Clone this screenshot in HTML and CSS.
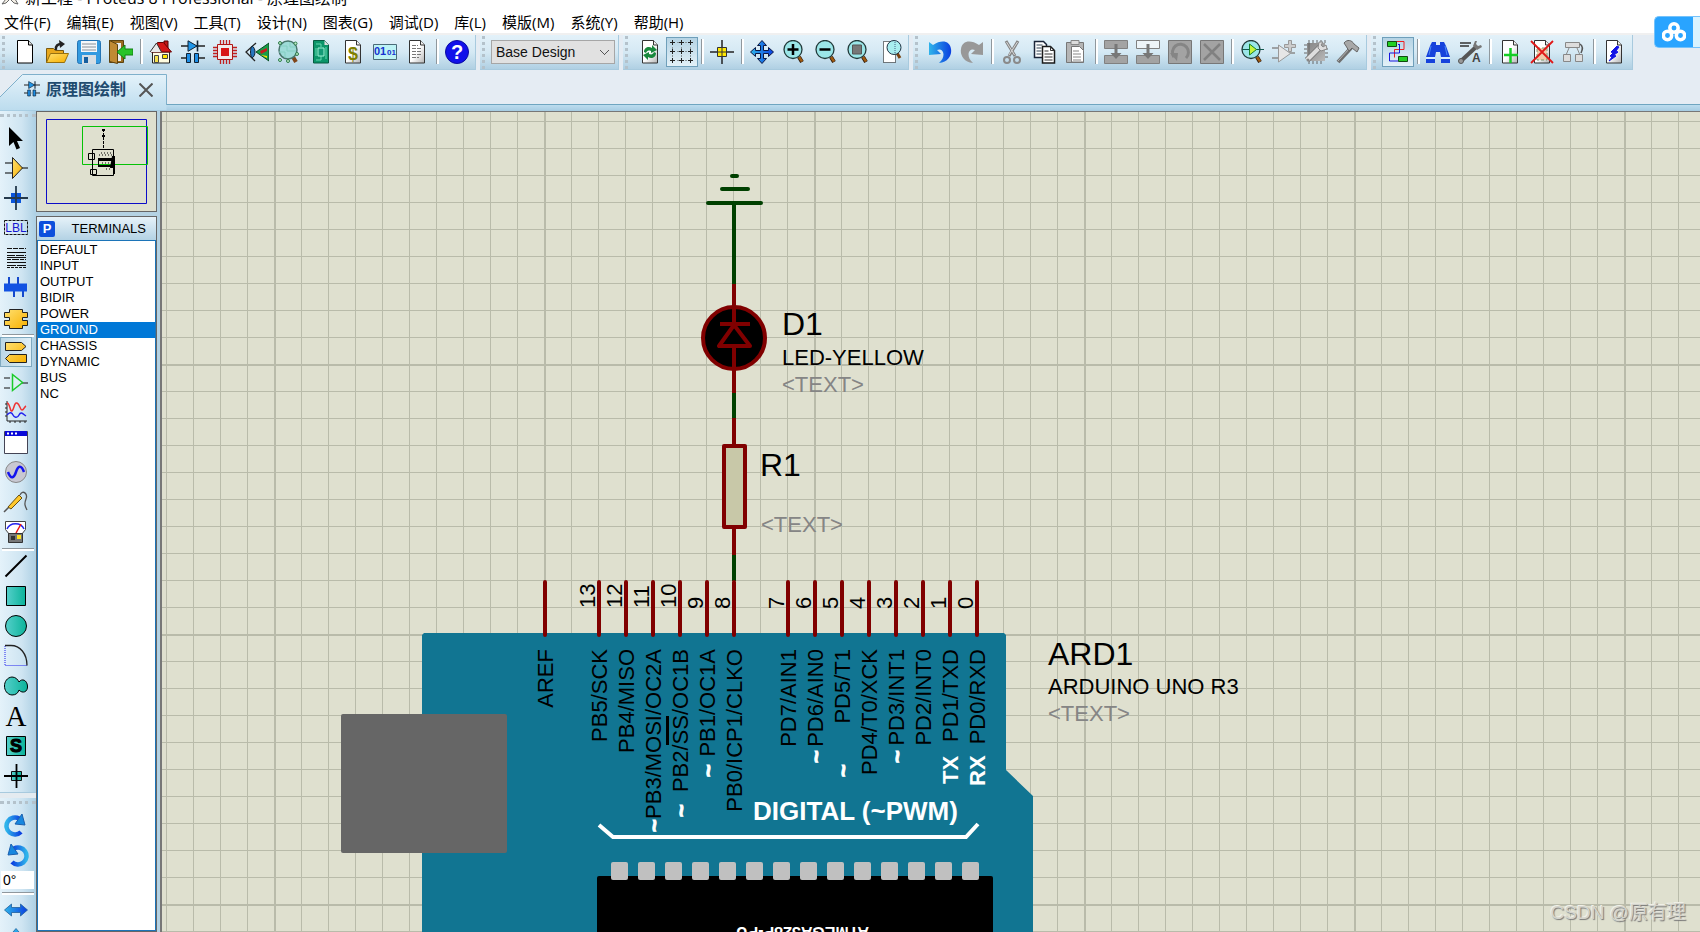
FILE: index.html
```html
<!DOCTYPE html>
<html lang="zh-CN">
<head>
<meta charset="utf-8">
<title>新工程 - Proteus 8 Professional - 原理图绘制</title>
<link rel="stylesheet" href="styles.css">
</head>
<body>
<svg class="defs" width="0" height="0" aria-hidden="true">
  <defs>
    <linearGradient id="gBlue" x1="0" y1="0" x2="1" y2="0"><stop offset="0" stop-color="#2fb4ea"/><stop offset="1" stop-color="#0a3fe0"/></linearGradient>
    <linearGradient id="gGold" x1="0" y1="0" x2="1" y2="1"><stop offset="0" stop-color="#ffe070"/><stop offset="1" stop-color="#f8b000"/></linearGradient>
    <linearGradient id="gTeal" x1="0" y1="0" x2="1" y2="0"><stop offset="0" stop-color="#55cfca"/><stop offset="1" stop-color="#0bb39a"/></linearGradient>
    <linearGradient id="gGrey" x1="0" y1="0" x2="1" y2="1"><stop offset="0" stop-color="#858585"/><stop offset="1" stop-color="#b8b8b8"/></linearGradient>
    <linearGradient id="gPage" x1="0" y1="0" x2="1" y2="1"><stop offset="0.5" stop-color="#ffffff"/><stop offset="1" stop-color="#b4b4b4"/></linearGradient>
    <linearGradient id="gTab" x1="0" y1="0" x2="0" y2="1"><stop offset="0" stop-color="#e4f2fa"/><stop offset="1" stop-color="#bcdcee"/></linearGradient>
    <symbol id="page" viewBox="0 0 24 24"><path d="M4.500.5h11l4 4.500v18h-15z" fill="url(#gPage)" stroke="#333"/><path d="M15.500.5v4.500h4" fill="#eee" stroke="#333"/></symbol>
    <symbol id="lens" viewBox="0 0 24 24"><path d="M17 17l3 5" stroke="#2a1608" stroke-width="4"/><path d="M17 17l3 4.500" stroke="#a05a10" stroke-width="2.500"/><circle cx="11" cy="9.500" r="9" fill="#9be6e8" stroke="#223a3a" stroke-width="1.300"/></symbol>
    <symbol id="parts" viewBox="0 0 24 24"><path d="M0 6h24M0 18h24" stroke="#222" stroke-width="1.500"/><path d="M7 .8v10.500L16 6z" fill="#2196e8" stroke="#123" /><path d="M16.500.5v11" stroke="#123" stroke-width="1.600"/><path d="M5.500 13.500h4v9h-4zM13.500 13.500h4v9h-4z" fill="#1f8fe6" stroke="#123"/><path d="M10 17h3v2h-3z" fill="#d0e6f2"/></symbol>
    <symbol id="undo" viewBox="0 0 24 24"><path d="M1 2v13l12-1-4-4c6-3 10 6 2 13 10-1 13-9 12-14C22 1 14-1 5 5z"/></symbol>
    <symbol id="turn" viewBox="0 0 24 24"><path d="M17 19A8.500 8.500 0 1 1 15 5.500" fill="none" stroke="url(#gBlue)" stroke-width="4.500"/><path d="M18 1l3 11-10-1z" fill="#1787df" stroke="#1b5fae"/></symbol>
    <symbol id="harrow" viewBox="0 0 24 24"><path d="M.5 12l7-6v3.500h9V6l7 6-7 6v-3.500h-9V18z" fill="url(#gBlue)" stroke="#1f5f9c" stroke-width=".8"/></symbol>
  </defs>
</svg>

<header class="titlebar">
  <svg class="title-icon" viewBox="0 0 18 18" aria-hidden="true"><path d="M1 17l4-5 3-2h3l3 2 3 5-4-1-4-4-4 4z" fill="#f4efe6" stroke="#666"/></svg>
  <span class="title-text">新工程 - Proteus 8 Professional - 原理图绘制</span>
</header>

<nav class="menubar" aria-label="主菜单">
  <button>文件(F)</button><button>编辑(E)</button><button>视图(V)</button><button>工具(T)</button><button>设计(N)</button><button>图表(G)</button><button>调试(D)</button><button>库(L)</button><button>模版(M)</button><button>系统(Y)</button><button>帮助(H)</button>
</nav>

<div class="toolbars">
  <div class="group first">
    <button class="tool" aria-label="新建"><svg viewBox="0 0 24 24"><path d="M4.500.5h11l4 4.500v18h-15z" fill="#fff" stroke="#000"/><path d="M15.500.5v4.500h4" fill="#ddd" stroke="#000"/></svg></button>
    <button class="tool" aria-label="打开"><svg viewBox="0 0 24 24"><path d="M1.500 22.500V8.500h7l2 2h8v12z" fill="#e9a81c" stroke="#7a5a10"/><path d="M1.500 22.500l4-9h18l-4 9z" fill="url(#gGold)" stroke="#96700f"/><path d="M11 10c-1-4 2-6 5-6" fill="none" stroke="#222" stroke-width="2.500"/><path d="M14 0l6 4-5 4z" fill="#222"/></svg></button>
    <button class="tool" aria-label="保存"><svg viewBox="0 0 24 24"><rect x=".5" y=".5" width="23" height="23" rx="2" fill="#329ae0" stroke="#2474b4"/><path d="M4 1h16v11H4z" fill="#f4f8fb"/><path d="M5 4h14M5 7h14M5 10h14" stroke="#879099"/><path d="M5 15h14v9H5z" fill="#d6dee4"/><path d="M7 17h4v6H7z" fill="#165f9f"/></svg></button>
    <button class="tool" aria-label="关闭"><svg viewBox="0 0 24 24"><path d="M.5.500h14v22H.5z" fill="#9b6c20" stroke="#5c4210"/><path d="M4 3h8v18H4z" fill="#e8edf0"/><path d="M.5.500l8 4v19l-8-2z" fill="#c08a33" stroke="#5c4210"/><path d="M8 12l8-7v4h8v6h-8v4z" fill="#28c428" stroke="#138013"/></svg></button>
    <span class="sep"></span>
    <button class="tool" aria-label="主页"><svg viewBox="0 0 24 24"><path d="M15 1h4v8h-4z" fill="#c01818" stroke="#500"/><path d="M3.500 12h17v11h-17z" fill="#fffce0" stroke="#222"/><path d="M8.500 2.500l6 0 8 9.500H2z" fill="#d31717" stroke="#600"/><path d="M1 12l6.500-9 5 9" fill="#e8e8e8" stroke="#333"/><path d="M5.500 15.500h4v7h-4z" fill="#f5e04d" stroke="#444"/><path d="M13.500 14.500h5v4h-5z" fill="#ffe600" stroke="#444"/></svg></button>
    <button class="tool" aria-label="原理图"><svg><use href="#parts"/></svg></button>
    <button class="tool" aria-label="PCB"><svg viewBox="0 0 24 24"><path d="M7.500 0v24M10.500 0v24M13.500 0v24M16.500 0v24M0 7.500h24M0 10.500h24M0 13.500h24M0 16.500h24" stroke="#c02020" stroke-width="1.300"/><path d="M4.500 4.500h15v15h-15z" fill="#f0eaea" stroke="#b01515"/><path d="M8 8h8v8H8z" fill="#d81515"/></svg></button>
    <button class="tool" aria-label="3D"><svg viewBox="0 0 24 24"><path d="M11 3L1 12l9 9" fill="none" stroke="#222" stroke-width="1.300"/><path d="M7 6c4 2 4 10 0 12-2-3-2-9 0-12" fill="#2677c0" stroke="#123"/><path d="M11 12L24 3v18z" fill="#189c48" stroke="#064a20"/><path d="M15 11l7-3v3l-6 3z" fill="#c41e1e"/><path d="M16 15l6 1v2z" fill="#ffe100"/></svg></button>
    <button class="tool" aria-label="查看器"><svg viewBox="0 0 24 24"><path d="M16 17l3 5" stroke="#80451a" stroke-width="4"/><circle cx="11" cy="10" r="9" fill="#9edbd8" stroke="#49756c" stroke-width="1.500"/><path d="M3 6h7v5h9M8 18v-6H2M13 2v5h6" fill="none" stroke="#84cfc2"/><g fill="#c3ecc8" stroke="#2b7c4b"><circle cx="3" cy="3" r="1.500"/><circle cx="18.500" cy="3.500" r="1.500"/><circle cx="3" cy="20" r="1.500"/><circle cx="11" cy="21" r="1.500"/><circle cx="20" cy="14" r="1.500"/></g></svg></button>
    <button class="tool" aria-label="Gerber"><svg viewBox="0 0 24 24"><path d="M4.500.5h11l4 4.500v18h-15z" fill="#0b9569" stroke="#065a40"/><path d="M15.500.5v4.500h4z" fill="#ddd"/><path d="M7 4h5v3M7 20h5v-4M17 7v12M7 8v8" fill="none" stroke="#64d8b0"/><path d="M9 8h6v8H9z" fill="#139a75" stroke="#9cf2d4"/></svg></button>
    <button class="tool" aria-label="物料清单"><svg viewBox="0 0 24 24"><use href="#page"/><text class="glyph dollar" x="12" y="20" text-anchor="middle">$</text></svg></button>
    <button class="tool" aria-label="源代码"><svg viewBox="0 0 24 24"><path d="M.5 4.500h23v15H.5z" fill="#bdf3f5" stroke="#4a6b78"/><text class="glyph bits" x="1" y="15">01</text><text class="glyph bits-small" x="14" y="15">01</text></svg></button>
    <button class="tool" aria-label="笔记"><svg viewBox="0 0 24 24"><use href="#page"/><path d="M7 5.500h6M7 8.500h10M7 11.500h10M7 14.500h10M7 17.500h7" stroke="#777" stroke-dasharray="4 1"/></svg></button>
    <span class="sep"></span>
    <button class="tool" aria-label="帮助"><svg viewBox="0 0 24 24"><circle cx="12" cy="12" r="11.500" fill="#1111ea" stroke="#0a0aa0"/><text class="glyph help" x="12" y="19" text-anchor="middle">?</text></svg></button>
  </div>

  <div class="group combo">
    <select aria-label="设计变体"><option>Base Design</option></select>
  </div>

  <div class="group">
    <button class="tool" aria-label="刷新"><svg viewBox="0 0 24 24"><use href="#page"/><path d="M6 12c0-5 5-6 8-4V5l5 5-6 3v-2c-3-1-4 0-5 2zM18 13c0 5-5 6-8 4v3l-5-5 6-3v2c3 1 4 0 5-2z" fill="#18883c"/></svg></button>
    <button class="tool on" aria-label="网格"><svg viewBox="0 0 24 24"><g fill="none" stroke="#89959b" stroke-dasharray="2 2"><path d="M3 2.500h18M3 11.500h18M3 20.500h18M2.500 3v18M11.500 3v18M20.500 3v18"/></g><path d="M0 2.500h5M9 2.500h5M18 2.500h5M0 11.500h5M9 11.500h5M18 11.500h5M0 20.500h5M9 20.500h5M18 20.500h5M2.500 0v5M2.500 9v5M2.500 18v5M11.500 0v5M11.500 9v5M11.500 18v5M20.500 0v5M20.500 9v5M20.500 18v5" stroke="#222"/></svg></button>
    <span class="sep"></span>
    <button class="tool" aria-label="原点"><svg viewBox="0 0 24 24"><path d="M0 12h24M12 0v24" stroke="#222" stroke-width="1.500"/><path d="M7.500 7.500h9v9h-9z" fill="#ffe800" stroke="#333"/><path d="M12 8v8M8 12h8" stroke="#333"/></svg></button>
    <span class="sep"></span>
    <button class="tool" aria-label="平移"><svg viewBox="0 0 24 24"><path d="M12 .5l4.500 5h-3v5h5v-3L23.500 12l-5 4.500v-3h-5v5h3l-4.500 5-4.500-5h3v-5h-5v3L.5 12l5-4.500v3h5v-5h-3z" fill="url(#gBlue)" stroke="#0b1742"/></svg></button>
    <button class="tool" aria-label="放大"><svg viewBox="0 0 24 24"><use href="#lens"/><path d="M11 4v11M5.500 9.500h11" stroke="#000" stroke-width="2.500"/></svg></button>
    <button class="tool" aria-label="缩小"><svg viewBox="0 0 24 24"><use href="#lens"/><path d="M5.500 9.500h11" stroke="#000" stroke-width="2.500"/></svg></button>
    <button class="tool" aria-label="全部显示"><svg viewBox="0 0 24 24"><use href="#lens"/><path d="M6.500 5h9v9h-9z" fill="#777" stroke="#555"/></svg></button>
    <button class="tool" aria-label="区域缩放"><svg viewBox="0 0 24 24"><path d="M5.500 1.500h12v21h-12z" fill="#fff" stroke="#000" stroke-dasharray="1 1"/><path d="M19 13l3 5" stroke="#7a4410" stroke-width="3"/><circle cx="16" cy="7.500" r="7" fill="#a8eef0" stroke="#234"/><path d="M17 2v12" stroke="#468" stroke-dasharray="1 1"/></svg></button>
  </div>

  <div class="group">
    <button class="tool" aria-label="撤销"><svg fill="url(#gBlue)"><use href="#undo"/></svg></button>
    <button class="tool" aria-label="重做"><svg viewBox="0 0 24 24" fill="#989898"><g transform="matrix(-1 0 0 1 24 0)"><path d="M1 2v13l12-1-4-4c6-3 10 6 2 13 10-1 13-9 12-14C22 1 14-1 5 5z"/></g></svg></button>
    <span class="sep"></span>
    <button class="tool" aria-label="剪切"><svg viewBox="0 0 24 24"><path d="M6 1l9 15M18 1L9 16" stroke="#858585" stroke-width="3"/><path d="M6.500 2l8 13M17.500 2L9 15" stroke="#d8d8d8"/><circle cx="7" cy="20" r="3" fill="none" stroke="#8a8a8a" stroke-width="2"/><circle cx="17" cy="20" r="3" fill="none" stroke="#8a8a8a" stroke-width="2"/></svg></button>
    <button class="tool" aria-label="复制"><svg viewBox="0 0 24 24"><path d="M2.500 1.500h9l3 3v13h-12z" fill="#fff" stroke="#1a2438" stroke-width="1.500"/><path d="M4.500 5h6M4.500 8h5M4.500 11h5M4.500 14h5" stroke="#345"/><path d="M10.500 6.500h8l4 4v12.500h-12z" fill="#fff" stroke="#1a1a1a" stroke-width="1.500"/><path d="M18.500 6.500v4h4M12.500 11h4M12.500 14h8M12.500 17h8M12.500 20h8" stroke="#333" fill="none"/></svg></button>
    <button class="tool" aria-label="粘贴"><svg viewBox="0 0 24 24"><path d="M2.500 2.500h17v20h-17z" fill="#b5b5b5" stroke="#777"/><path d="M7 .5h8v4H7z" fill="#ddd" stroke="#888"/><path d="M7.500 6.500h8l4 4v11.500h-12z" fill="#fff" stroke="#777"/><path d="M9 11h6M9 14h8M9 17h8M9 20h8" stroke="#888"/></svg></button>
    <span class="sep"></span>
    <button class="tool" aria-label="块复制"><svg viewBox="0 0 24 24"><path d="M.5.5h23v8H.5zM.5 15.500h23v8H.5z" fill="#a3a3a3" stroke="#808080"/><path d="M10.500 4h3v9h4L12 19l-5.500-6h4z" fill="#777"/></svg></button>
    <button class="tool" aria-label="块移动"><svg viewBox="0 0 24 24"><path d="M.5.5h23v8H.5z" fill="#edf4f8" stroke="#808080"/><path d="M.5 15.500h23v8H.5z" fill="#a3a3a3" stroke="#808080"/><path d="M10.500 4h3v9h4L12 19l-5.500-6h4z" fill="#777"/></svg></button>
    <button class="tool" aria-label="块旋转"><svg viewBox="0 0 24 24"><path d="M.5.5h23v23H.5z" fill="#a3a3a3" stroke="#777"/><path d="M6 17a8 8 0 1 1 12 1" fill="none" stroke="#858585" stroke-width="3"/><path d="M2 13h8l-1 8z" fill="#858585"/></svg></button>
    <button class="tool" aria-label="块删除"><svg viewBox="0 0 24 24"><path d="M.5.5h23v23H.5z" fill="#a3a3a3" stroke="#777"/><path d="M4 4l16 16M20 4L4 20" stroke="#808080" stroke-width="2.500"/></svg></button>
    <span class="sep"></span>
    <button class="tool" aria-label="选取器件"><svg viewBox="0 0 24 24"><use href="#lens"/><path d="M2 9.500h22" stroke="#12594e"/><path d="M9.500 4v11l7-5.500z" fill="#c5f33c" stroke="#128228"/></svg></button>
    <button class="tool" aria-label="制作器件"><svg viewBox="0 0 24 24"><path d="M0 8h6M0 18h6M17 13h6" stroke="#8a8a8a" stroke-width="1.500"/><path d="M6.500 5v17l12-8.500z" fill="#e6e6e6" stroke="#999"/><path d="M16.500.5h3v4h4v3h-4v4h-3v-4h-4v-3h4z" fill="#ccc" stroke="#999"/></svg></button>
    <button class="tool" aria-label="封装工具"><svg viewBox="0 0 24 24"><path d="M3 3h18v18H3z" fill="url(#gGrey)"/><path d="M5 0v24M9 0v3M13 0v3M17 0v3M21 0v3M9 21v3M13 21v3M17 21v3M0 5h3M0 9h3M0 13h3M21 9h3M21 13h3M21 17h3" stroke="#666"/><path d="M3 20L17 6" stroke="#777" stroke-width="6"/><path d="M3 20L17 6" stroke="#ddd" stroke-width="4"/><path d="M15 2l-1 6 3 3 6-2-1-4-3 2-2-2 2-3z" fill="#ddd" stroke="#888"/><circle cx="4" cy="20" r="1.500" fill="#888"/></svg></button>
    <button class="tool" aria-label="分解"><svg viewBox="0 0 24 24"><path d="M2 22L15 8" stroke="#6f6f6f" stroke-width="4"/><path d="M2 21L14 8" stroke="#b5b5b5"/><path d="M8 3c3-4 8-3 10 1l5 4-2 4-5-4-3 3-3-5z" fill="#a8a8a8" stroke="#666"/></svg></button>
  </div>

  <div class="group">
    <button class="tool on" aria-label="自动连线"><svg viewBox="0 0 24 24"><path d="M10 1.500h8v8H8.500v8" fill="none" stroke="#ee2020"/><path d="M13.500 5v8H3.500v8h9M12 4.500h2" fill="none" stroke="#1616e0"/><path d="M1.500 1.500h9v5h-9zM12.500 16.500h9v5h-9z" fill="#22d022" stroke="#114a11"/></svg></button>
    <span class="sep"></span>
    <button class="tool" aria-label="查找"><svg viewBox="0 0 24 24"><path d="M6 2h4v3h4V2h4l2 4 4 11v6h-9v-6l-1-5h-4l-1 5v6H0v-6L4 6z" fill="#1642dc"/><path d="M0 18h9M15 18h9" stroke="#d6edff" stroke-width="2"/><path d="M5 6l-2 9M19 6l2 9" stroke="#4c8af4"/></svg></button>
    <button class="tool" aria-label="属性工具"><svg viewBox="0 0 24 24"><path d="M2 3h11M2 6h9" stroke="#333" stroke-width="1.500"/><path d="M3 21L18 7" stroke="#555" stroke-width="4"/><path d="M17 1l-2 5 4 4 5-3-1-2-3 1-2-2 1-3z" fill="#777"/><circle cx="3" cy="21" r="2.500" fill="#999" stroke="#555"/><text class="glyph tool-a" x="14" y="22">A</text></svg></button>
    <span class="sep"></span>
    <button class="tool" aria-label="新建图纸"><svg viewBox="0 0 24 24"><use href="#page"/><path d="M12.500 8v15M6 15h14" stroke="#15cd25" stroke-width="2.500"/></svg></button>
    <button class="tool" aria-label="删除图纸"><svg viewBox="0 0 24 24"><use href="#page"/><path d="M7 8h10v12H7z" fill="#f2c9a8" stroke="#7a9a73" stroke-dasharray="3 2"/><path d="M1 1l22 22M23 1L1 23" stroke="#e01818" stroke-width="1.800"/></svg></button>
    <button class="tool" aria-label="退出子图纸"><svg viewBox="0 0 24 24"><path d="M7 8l-3 7M15 8l3 7" stroke="#888"/><path d="M3.500 2.500h14v5h-14zM1.500 14.500h7v7h-7zM13.500 14.500h7v7h-7z" fill="#ddd" stroke="#888"/><path d="M18 4c3 2 3 5 1 9" fill="none" stroke="#555" stroke-width="1.500"/></svg></button>
    <span class="sep"></span>
    <button class="tool" aria-label="电气检查"><svg viewBox="0 0 24 24"><use href="#page"/><path d="M15 6L9 12l2 1-3 3 2 1-3 4 7-5-2-1 4-3-2-1 3-4z" fill="#1313e6" stroke="#1313e6"/></svg></button>
  </div>
</div>

<div class="tabstrip">
  <div class="tab">
    <svg class="tab-shape" viewBox="0 0 167 36" preserveAspectRatio="none" aria-hidden="true"><path d="M-1 36V24L22.500.5h144V36z" fill="url(#gTab)"/><path d="M0 23L22.500.5h144V31" fill="none" stroke="#7fb0cb"/></svg>
    <svg class="tab-icon" aria-hidden="true"><use href="#parts"/></svg>
    <span class="tab-title">原理图绘制</span>
    <button class="tab-close" aria-label="关闭标签"><svg viewBox="0 0 14 14"><path d="M.5.500l13 13M13.500.5l-13 13" stroke="#555" stroke-width="2"/></svg></button>
  </div>
</div>

<main class="workspace">
  <aside class="modes">
    <div class="mode-group">
      <button class="mode" aria-label="选择"><svg viewBox="0 0 24 24"><path d="M5 1v19l4.500-4 3 7.500 3.500-1.500-3-7h6z" fill="#000"/></svg></button>
      <button class="mode" aria-label="元件"><svg viewBox="0 0 24 24"><path d="M1 7h8M1 17h8M17 12h7" stroke="#000" stroke-width="1.200"/><path d="M8.500 1.500v21l10-10.500z" fill="url(#gGold)" stroke="#222"/></svg></button>
      <button class="mode" aria-label="节点"><svg viewBox="0 0 24 24"><path d="M7 7h10v10H7z" fill="#0a55dc"/><path d="M0 12h24M12 0v24" stroke="#24394c" stroke-width="1.800"/></svg></button>
      <button class="mode" aria-label="连线标号"><svg viewBox="0 0 24 24"><path d="M.5 4.500h23v14H.5z" fill="none" stroke="#111" stroke-dasharray="3 1"/><text class="glyph lbl" x="12" y="16" text-anchor="middle">LBL</text></svg></button>
      <button class="mode" aria-label="文本脚本"><svg viewBox="0 0 24 24"><path d="M3 2.500h19" stroke="#111" stroke-dasharray="5 1"/><path d="M3 6.500h19M3 11.500h19M3 16.500h19" stroke="#111"/><path d="M3 9.500h19" stroke="#111" stroke-dasharray="8 1"/><path d="M3 13.500h19" stroke="#111" stroke-dasharray="4 1 7 1"/><path d="M3 19.500h19" stroke="#111" stroke-dasharray="9 1"/><path d="M3 21.500h19" stroke="#111" stroke-dasharray="3 1"/></svg></button>
      <button class="mode" aria-label="总线"><svg viewBox="0 0 24 24"><path d="M5 1v8M14 1v8M10 14v7M19 14v7" stroke="#1448cc" stroke-width="2"/><path d="M0 7.500h23v8H0z" fill="#1252e2"/></svg></button>
      <button class="mode" aria-label="子电路"><svg viewBox="0 0 24 24"><path d="M5.500 3.500h13v3h5v5h-5v3h5v5h-5v3h-13v-3h-5v-5h5v-3h-5v-5h5z" fill="url(#gGold)" stroke="#222"/></svg></button>
      <span class="hsep"></span>
      <button class="mode on" aria-label="终端"><svg viewBox="0 0 24 24"><path d="M1.500 2.500h16l4.500 4-4.500 4h-16zM22.500 14.500h-17l-4 4 4 4h17z" fill="url(#gGold)" stroke="#222"/></svg></button>
      <button class="mode" aria-label="引脚"><svg viewBox="0 0 24 24"><path d="M0 8h6M0 18h6M18 13h6" stroke="#111" stroke-width="1.200"/><path d="M8.500 4.500v16l10-8z" fill="#dceff5" stroke="#1bcb2a" stroke-width="1.500"/></svg></button>
      <button class="mode" aria-label="图表"><svg viewBox="0 0 24 24"><path d="M3 1v20h20M1 4h2M1 8h2M1 12h2M1 16h2M6 21v2M11 21v2M16 21v2M21 21v2" fill="none" stroke="#222"/><path d="M3 3c3 0 3 9 5 8s2-9 5-8 3 7 5 7 2-3 4-4" fill="none" stroke="#e33" stroke-width="1.500"/><path d="M3 15c3-4 5-2 6 0s4 4 6 0 4-1 7 1" fill="none" stroke="#22e" stroke-width="1.500"/></svg></button>
      <button class="mode" aria-label="弹出窗口"><svg viewBox="0 0 24 24"><path d="M.5 1.500h23v22H.5z" fill="#fff" stroke="#445"/><path d="M1 1h22v5H1z" fill="#0808d8"/><path d="M3 3.500h2M7 3.500h2M11 3.500h2" stroke="#fff" stroke-width="2"/></svg></button>
      <button class="mode" aria-label="激励源"><svg viewBox="0 0 24 24"><circle cx="12" cy="12" r="10.500" fill="#c8c8d2" stroke="#888"/><path d="M4 12c3 8 6 6 8 0s5-8 8 0" fill="none" stroke="#1414ee" stroke-width="2.500"/></svg></button>
      <button class="mode" aria-label="探针"><svg viewBox="0 0 24 24"><path d="M0 22l5-5" stroke="#555" stroke-width="1.500"/><path d="M4 17L15 5l3 3L7 19z" fill="#ffc82b" stroke="#6a5010"/><path d="M16 5c3-6 8-1 6 4s-1 7 1 11" fill="none" stroke="#555" stroke-width="1.300"/></svg></button>
      <button class="mode" aria-label="仪表"><svg viewBox="0 0 24 24"><path d="M1.500 1.500h20v8l-4 5h-12l-4-5z" fill="#fff" stroke="#444"/><path d="M3 9c3-7 14-7 17 0" fill="none" stroke="#22e" stroke-width="1.500"/><path d="M12 13l5-9" stroke="#e11" stroke-width="1.500"/><path d="M4.500 13.500h14v9h-14z" fill="#777" stroke="#333"/><path d="M7 16h4v4H7z" fill="#333"/><path d="M13 15h4v4h-4z" fill="#ffe31d"/></svg></button>
      <span class="hsep"></span>
      <button class="mode" aria-label="直线"><svg viewBox="0 0 24 24"><path d="M1.500 22.500L22.500 1.500" stroke="#000" stroke-width="2"/></svg></button>
      <button class="mode" aria-label="矩形"><svg viewBox="0 0 24 24"><path d="M2.500 2.500h19v19h-19z" fill="url(#gTeal)" stroke="#000"/></svg></button>
      <button class="mode" aria-label="圆形"><svg viewBox="0 0 24 24"><circle cx="12" cy="12" r="10.500" fill="url(#gTeal)" stroke="#000"/></svg></button>
      <button class="mode" aria-label="圆弧"><svg viewBox="0 0 24 24"><path d="M1 2v19.500h22" fill="none" stroke="#22e" stroke-dasharray="1 1"/><path d="M1 1.500h6c9 0 16 8 16 20" fill="none" stroke="#222" stroke-width="1.300"/></svg></button>
      <button class="mode" aria-label="路径"><svg viewBox="0 0 24 24"><path d="M8 3c4 0 6 3 7 5 3-4 8-2 8.500 4s-5 8-8.500 4c-1 3-3 5-7 5C-2 20-2 4 8 3z" fill="url(#gTeal)" stroke="#000"/></svg></button>
      <button class="mode" aria-label="文本"><svg viewBox="0 0 24 24"><text class="glyph serif-a" x="12" y="22" text-anchor="middle">A</text></svg></button>
      <button class="mode" aria-label="符号"><svg viewBox="0 0 24 24"><path d="M2.500 2.500h19v19h-19z" fill="url(#gTeal)" stroke="#000"/><text class="glyph sym" x="12" y="18" text-anchor="middle">S</text></svg></button>
      <button class="mode" aria-label="标记"><svg viewBox="0 0 24 24"><path d="M7.500 7.500h10v9h-10z" fill="url(#gTeal)" stroke="#111"/><path d="M0 12h24M12.500 0v24" stroke="#000" stroke-width="1.800"/></svg></button>
    </div>
    <div class="mode-group">
      <button class="mode" aria-label="顺时针旋转"><svg><use href="#turn"/></svg></button>
      <button class="mode" aria-label="逆时针旋转"><svg viewBox="0 0 24 24"><g transform="matrix(-1 0 0 1 25 0)"><use href="#turn" width="24" height="24"/></g></svg></button>
      <input class="angle" type="text" value="0°" aria-label="角度">
      <span class="hsep"></span>
      <button class="mode" aria-label="水平镜像"><svg><use href="#harrow"/></svg></button>
      <button class="mode" aria-label="垂直镜像"><svg viewBox="0 0 24 24"><g transform="rotate(90 12 12)"><use href="#harrow" width="24" height="24"/></g></svg></button>
    </div>
  </aside>

  <section class="panel">
    <svg class="overview" role="img" aria-label="图纸概览" viewBox="0 0 119 99">
      <path d="M9.500 7.500h100v84h-100z" fill="none" stroke="#0c0cc8"/>
      <path d="M45.500 14.500h65v38h-65z" fill="none" stroke="#06c206"/>
      <path d="M66.500 17v19" stroke="#000" stroke-dasharray="3 1"/><path d="M65 17h3v2h-3zM65 23h3v2h-3z"/>
      <path d="M55.500 37.500h21v26h-21zM51.500 41.500h6v6h-6zM53.500 57.500h6v5h-6z" fill="none" stroke="#000"/>
      <path d="M61 46h17v3H61zM61 53h13v2H61zM75 44h3v18h-2v-6h-3zM61 47h1v7h-1z"/><path d="M62 43h14M64 41h10M65 51h8M69 57h4" stroke="#000" stroke-dasharray="1 2"/>
    </svg>
    <div class="selector">
      <header class="selector-head"><button class="pick" aria-label="选取">P</button><h2>TERMINALS</h2></header>
      <ul class="list">
        <li>DEFAULT</li><li>INPUT</li><li>OUTPUT</li><li>BIDIR</li><li>POWER</li><li class="sel">GROUND</li><li>CHASSIS</li><li>DYNAMIC</li><li>BUS</li><li>NC</li>
      </ul>
    </div>
  </section>

  <section class="sheet">
    <svg class="drawing" role="img" aria-label="原理图">
      <defs>
        <pattern id="grid" width="270" height="270" patternUnits="userSpaceOnUse" x="4" y="94">
          <path d="M0 27.500h270M0 54.500h270M0 81.500h270M0 108.500h270M0 135.500h270M0 162.500h270M0 189.500h270M0 216.500h270M0 243.500h270M27.500 0v270M54.500 0v270M81.500 0v270M108.500 0v270M135.500 0v270M162.500 0v270M189.500 0v270M216.500 0v270M243.500 0v270" stroke="#b9bbaa"/>
          <path d="M0 1h270M1 0v270" stroke="#b9bbaa" stroke-width="2"/>
        </pattern>
      </defs>
      <g transform="translate(-162 -112)">
        <rect x="0" y="0" width="4000" height="3000" fill="url(#grid)"/>

        <g class="wire"><path d="M734 203v81M734 393v26M734 555v26"/><path class="round" d="M708 203h53M722 189h26M732 176h5"/></g>
        <g class="comp">
          <circle cx="734" cy="338" r="31" fill="#000"/>
          <path d="M734 284v40M734 346v47M734 418v28M734 527v28M720 324h30M734 325l-15 21h31z" fill="none"/>
          <rect x="724" y="446" width="21" height="81" fill="#c8c8a8"/>
        </g>
        <text class="ref" x="782" y="335">D1</text><text class="val" x="782" y="365">LED-YELLOW</text><text class="val dim" x="782" y="392">&lt;TEXT&gt;</text>
        <text class="ref" x="760" y="476">R1</text><text class="val dim" x="761" y="532">&lt;TEXT&gt;</text>

        <path class="board" d="M424 633h580l2 2v135l27 26v1400H422V635z"/>
        <rect x="341" y="714" width="166" height="139" rx="2" fill="#666"/>
        <path class="pins" d="M545 582v53M599 582v53M626 582v53M653 582v53M680 582v53M707 582v53M734 582v53M788 582v53M815 582v53M842 582v53M869 582v53M896 582v53M923 582v53M950 582v53M977 582v53"/>

        <g class="val">
          <text transform="translate(595 608) rotate(-90)">13</text><text transform="translate(622 608) rotate(-90)">12</text><text transform="translate(649 608) rotate(-90)">11</text><text transform="translate(676 608) rotate(-90)">10</text><text transform="translate(703 609) rotate(-90)">9</text><text transform="translate(730 609) rotate(-90)">8</text><text transform="translate(784 609) rotate(-90)">7</text><text transform="translate(811 609) rotate(-90)">6</text><text transform="translate(838 609) rotate(-90)">5</text><text transform="translate(865 609) rotate(-90)">4</text><text transform="translate(892 609) rotate(-90)">3</text><text transform="translate(919 609) rotate(-90)">2</text><text transform="translate(946 609) rotate(-90)">1</text><text transform="translate(973 609) rotate(-90)">0</text>
        </g>
        <g class="val end">
          <text transform="translate(553 649) rotate(-90)">AREF</text><text transform="translate(607 649) rotate(-90)">PB5/SCK</text><text transform="translate(634 649) rotate(-90)">PB4/MISO</text><text transform="translate(661 649) rotate(-90)">PB3/MOSI/OC2A</text><text transform="translate(688 649) rotate(-90)">PB2/SS/OC1B</text><text transform="translate(715 649) rotate(-90)">PB1/OC1A</text><text transform="translate(742 649) rotate(-90)">PB0/ICP1/CLKO</text><text transform="translate(796 649) rotate(-90)">PD7/AIN1</text><text transform="translate(823 649) rotate(-90)">PD6/AIN0</text><text transform="translate(850 649) rotate(-90)">PD5/T1</text><text transform="translate(877 649) rotate(-90)">PD4/T0/XCK</text><text transform="translate(904 649) rotate(-90)">PD3/INT1</text><text transform="translate(931 649) rotate(-90)">PD2/INT0</text><text transform="translate(958 649) rotate(-90)">PD1/TXD</text><text transform="translate(985 649) rotate(-90)">PD0/RXD</text>
        </g>
        <path d="M667.500 716v29" stroke="#000" stroke-width="3"/>
        <g class="silk">
          <g class="tilde"><text transform="translate(662 832) rotate(-90)">~</text><text transform="translate(689 817) rotate(-90)">~</text><text transform="translate(716 777) rotate(-90)">~</text><text transform="translate(824 763) rotate(-90)">~</text><text transform="translate(851 777) rotate(-90)">~</text><text transform="translate(905 763) rotate(-90)">~</text></g>
          <text transform="translate(958 784) rotate(-90)">TX</text><text transform="translate(985 786) rotate(-90)">RX</text>
          <text class="bank" x="753" y="820">DIGITAL (~PWM)</text>
          <path d="M599 825l14 12h353l12-13" fill="none" stroke="#fff" stroke-width="4"/>
        </g>
        <rect x="597" y="876" width="396" height="1400" rx="2"/>
        <g fill="#c0c0c0"><rect x="611" y="862" width="17" height="18" rx="2"/><rect x="638" y="862" width="17" height="18" rx="2"/><rect x="665" y="862" width="17" height="18" rx="2"/><rect x="692" y="862" width="17" height="18" rx="2"/><rect x="719" y="862" width="17" height="18" rx="2"/><rect x="746" y="862" width="17" height="18" rx="2"/><rect x="773" y="862" width="17" height="18" rx="2"/><rect x="800" y="862" width="17" height="18" rx="2"/><rect x="827" y="862" width="17" height="18" rx="2"/><rect x="854" y="862" width="17" height="18" rx="2"/><rect x="881" y="862" width="17" height="18" rx="2"/><rect x="908" y="862" width="17" height="18" rx="2"/><rect x="935" y="862" width="17" height="18" rx="2"/><rect x="962" y="862" width="17" height="18" rx="2"/></g>
        <text class="chip" transform="translate(869 927) rotate(180)">ATMEGA328P-PU</text>

        <text class="ref" x="1048" y="665">ARD1</text><text class="val" x="1048" y="694">ARDUINO UNO R3</text><text class="val dim" x="1048" y="721">&lt;TEXT&gt;</text>
      </g>
    </svg>
    <p class="watermark">CSDN @原有理</p>
  </section>
</main>

<button class="cloud" aria-label="网盘"><svg viewBox="0 0 24 20"><g fill="none" stroke="#fff" stroke-width="3.500"><circle cx="12" cy="6" r="4.200"/><circle cx="5.500" cy="13.500" r="4.200"/><circle cx="18.500" cy="13.500" r="4.200"/></g></svg></button>
</body>
</html>
```
FILE: styles.css
```css
* { box-sizing: border-box; }

body {
  margin: 0;
  height: 100vh;
  display: flex;
  flex-direction: column;
  overflow: hidden;
  position: relative;
  background: #e5ecf3;
  color: #000;
  font-family: "Open Sans", "Noto Sans CJK SC", sans-serif;
}

button { border: 0; padding: 0; background: none; color: inherit; font: inherit; }
.defs { position: absolute; }

.titlebar { display: flex; gap: 6px; height: 11px; overflow: hidden; background: #fff; padding-left: 1px; }
.title-icon { width: 18px; height: 18px; margin-top: -13px; flex: none; }
.title-text { font-size: 16px; line-height: 20px; margin-top: -12px; white-space: nowrap; }

.menubar { display: flex; gap: 16px; height: 22px; padding-left: 4px; background: #fff; font-size: 15px; line-height: 22px; }
.menubar button { white-space: nowrap; }

.toolbars { display: flex; gap: 4px; flex: none; border-top: 2px solid #f0f0f0; }
.group {
  position: relative;
  display: flex;
  height: 35px;
  padding: 2px 2px 3px 11px;
  border-right: 1px solid #a8cade;
  border-bottom: 1px solid #a8cade;
  background: linear-gradient(#e3f1f9, #d5e9f4 50%, #b0d0e3);
}
.group.first { padding-left: 9px; }
.group::before {
  content: "";
  position: absolute;
  left: 2px;
  top: 1px;
  bottom: 0;
  border-left: 3px dotted #b4c2cb;
}
.tool { width: 32px; height: 30px; display: grid; place-items: center; flex: none; }
.tool svg, .mode svg { width: 24px; height: 24px; display: block; }
.tool.on { border: 1px solid #6f9fba; background: linear-gradient(#b5d3e4, #e3f1f8); }
.sep { width: 8px; margin: 2px 0; display: flex; justify-content: center; }
.sep::before { content: ""; width: 2px; border-left: 1px solid #8f989e; background: #fff; }

.combo { padding: 5px 3px 5px 11px; }
.combo select {
  width: 124px;
  height: 24px;
  padding: 0 20px 0 4px;
  border: 1px solid #a6a6a6;
  border-radius: 0;
  appearance: none;
  background:
    linear-gradient(45deg, transparent 46%, #555 46% 56%, transparent 56%) 108px 9px / 5px 5px no-repeat,
    linear-gradient(-45deg, transparent 46%, #555 46% 56%, transparent 56%) 112px 9px / 5px 5px no-repeat,
    #e1e1e1;
  color: #111;
  font: 14px "Liberation Sans", Arial, sans-serif;
}

.glyph { font-family: "Liberation Sans", Arial, sans-serif; font-weight: 700; }
.dollar { font-size: 18px; fill: #808000; }
.bits { font-size: 11px; fill: #1733d0; }
.bits-small { font-size: 8px; fill: #1733d0; }
.help { font-size: 20px; fill: #fff; }
.tool-a { font-size: 12px; fill: #444; }
.lbl { font-size: 12px; font-weight: 400; fill: #1414d0; }
.mode svg { overflow: visible; }
.serif-a { font-family: "Liberation Serif", "Times New Roman", serif; font-size: 29px; font-weight: 400; }
.sym { font-size: 18px; stroke: #000; }

.tabstrip {
  height: 41px;
  flex: none;
  padding-top: 4px;
  background: linear-gradient(#6fa5c0, #6fa5c0) 0 34px / 100% 1px no-repeat, linear-gradient(#bcdcee, #a6cce2) 0 35px / 100% 6px no-repeat;
}
.tab { position: relative; width: 167px; height: 36px; display: flex; align-items: flex-start; padding-left: 24px; }
.tab-shape { position: absolute; inset: 0; width: 100%; height: 100%; }
.tab-icon { position: relative; width: 16px; height: 20px; margin-top: 5px; }
.tab-title { position: relative; margin-left: 6px; font: 700 16px/28px "Noto Sans CJK SC", sans-serif; color: #1f4b6f; }
.tab-close { position: relative; margin: 9px 0 0 13px; width: 14px; height: 14px; }
.tab-close svg { display: block; }

.workspace { flex: 1; min-height: 0; display: flex; background: #b4d2e3; }
.modes { width: 36px; flex: none; overflow: hidden; display: flex; flex-direction: column; gap: 5px; background: #e4ebf0; }
.mode-group {
  position: relative;
  flex: none;
  display: flex;
  flex-direction: column;
  padding: 12px 0 1px;
  border-bottom: 1px solid #a8cade;
  background: linear-gradient(90deg, #e4f2fa, #cfe5f2 60%, #add0e4);
}
.mode-group::before { content: ""; position: absolute; left: 0; right: 0; top: 3px; border-top: 3px dotted #b4c2cb; }
.mode { width: 32px; height: 30px; display: grid; place-items: center; flex: none; }
.mode.on { border: 1px solid #7fa9c0; background: linear-gradient(90deg, #bcd8e7, #e0eff7); }
.hsep { height: 4px; margin: 0 2px; border-top: 1px solid transparent; }
.hsep::before { content: ""; display: block; height: 2px; border-top: 1px solid #8f989e; background: #fff; }
.angle { width: 33px; height: 18px; margin: 1px 0 2px 1px; padding: 0 2px; border: 0; background: #fff; font: 14px "Liberation Sans", Arial, sans-serif; }

.panel { width: 121px; flex: none; display: flex; flex-direction: column; gap: 4px; }
.overview { width: 121px; height: 101px; border: 1px solid #666; background: #dfe0cf; flex: none; }
.selector { flex: 1; min-height: 0; display: flex; flex-direction: column; border: 1px solid #666; font-family: "Liberation Sans", Arial, sans-serif; font-size: 13px; }
.selector-head { display: flex; align-items: center; justify-content: space-between; height: 23px; flex: none; padding: 0 10px 0 2px; background: linear-gradient(#e6f2f9, #b3d2e4); }
.selector-head h2 { margin: 0; font-size: 13px; font-weight: 400; }
.pick { width: 16px; height: 16px; border-radius: 2px; background: #0d4fdc; color: #fff; font-weight: 700; font-size: 13px; line-height: 16px; }
.list { flex: 1; margin: 0; padding: 1px 0 0; list-style: none; background: #fff; border: 1px solid #1c74b8; line-height: 16px; overflow: hidden; }
.list li { padding-left: 2px; }
.list .sel { background: #0078d7; color: #fff; }

.sheet { position: relative; flex: 1; min-width: 0; margin-left: 3px; border-left: 2px solid #777; border-top: 1px solid #777; background: #dfe0cf; overflow: hidden; }
.drawing { display: block; width: 100%; height: 100%; font-family: "Liberation Sans", Arial, sans-serif; }
.wire { stroke: #004000; stroke-width: 4; }
.round { stroke-linecap: round; }
.comp, .pins { stroke: #800000; stroke-width: 4; stroke-linejoin: round; }
.pins { stroke-linecap: round; }
.board { fill: #117592; }
.ref { font-size: 32px; }
.val { font-size: 22px; }
.dim { fill: #858585; }
.end { text-anchor: end; }
.silk { font-size: 22px; font-weight: 700; fill: #fff; }
.tilde { stroke: #fff; stroke-width: 1; }
.bank { font-size: 26px; }
.chip { font-size: 16px; font-weight: 700; fill: #fff; }
.watermark {
  position: absolute;
  right: 14px;
  bottom: 5px;
  margin: 0;
  font: 19px/28px "Liberation Sans", "Noto Sans CJK SC", sans-serif;
  color: #d4d4cc;
  text-shadow: 1px 1px 1px #777, -1px -1px 0 #f0f0e8;
}

.cloud { position: absolute; right: 0; top: 16px; width: 46px; height: 32px; border-radius: 5px 0 0 5px; background: linear-gradient(90deg, #29a4ff 38px, #d9f3ff 38px); border: 1px solid #74c2fb; border-right: 0; }
.cloud svg { display: block; width: 24px; height: 20px; margin-left: 7px; }
```
